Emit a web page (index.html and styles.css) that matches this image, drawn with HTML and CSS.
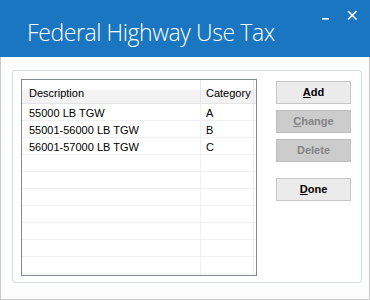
FILE: index.html
```html
<!DOCTYPE html>
<html>
<head>
<meta charset="utf-8">
<link rel="stylesheet" href="styles.css">
</head>
<body>
<div class="window">
  <div class="titlebar">
    <span class="title">Federal Highway Use Tax</span>
    <div class="controls">
      <svg class="ctl" width="10" height="10" viewBox="0 0 10 10"><rect x="1" y="8" width="7" height="1.6" fill="#fff"/></svg>
      <svg class="ctl" width="11" height="10" viewBox="0 0 11 10"><path d="M1 1 L9.5 9.5 M9.5 1 L1 9.5" stroke="#fff" stroke-width="1.6" fill="none"/></svg>
    </div>
  </div>
  <div class="client">
    <div class="group">
      <div class="list">
        <div class="row header"><div class="c1">Description</div><div class="c2">Category</div><div class="c3"></div></div>
        <div class="row"><div class="c1">55000 LB TGW</div><div class="c2">A</div><div class="c3"></div></div>
        <div class="row"><div class="c1">55001-56000 LB TGW</div><div class="c2">B</div><div class="c3"></div></div>
        <div class="row"><div class="c1">56001-57000 LB TGW</div><div class="c2">C</div><div class="c3"></div></div>
        <div class="row"><div class="c1"></div><div class="c2"></div><div class="c3"></div></div>
        <div class="row"><div class="c1"></div><div class="c2"></div><div class="c3"></div></div>
        <div class="row"><div class="c1"></div><div class="c2"></div><div class="c3"></div></div>
        <div class="row"><div class="c1"></div><div class="c2"></div><div class="c3"></div></div>
        <div class="row"><div class="c1"></div><div class="c2"></div><div class="c3"></div></div>
        <div class="row"><div class="c1"></div><div class="c2"></div><div class="c3"></div></div>
        <div class="row"><div class="c1"></div><div class="c2"></div><div class="c3"></div></div>
        <div class="row"><div class="c1"></div><div class="c2"></div><div class="c3"></div></div>
      </div>
      <div class="buttons">
        <div class="btn"><u>A</u>dd</div>
        <div class="btn disabled"><u>C</u>hange</div>
        <div class="btn disabled">Delete</div>
        <div class="btn done"><u>D</u>one</div>
      </div>
    </div>
  </div>
</div>
</body>
</html>
```

FILE: styles.css
```css
html, body {
  margin: 0;
  padding: 0;
  background: #ffffff;
}
.window {
  width: 370px;
  height: 300px;
  display: flex;
  flex-direction: column;
  font-family: "Liberation Sans", Arial, sans-serif;
  font-size: 11px;
  color: #000;
}
.titlebar {
  height: 57px;
  background: #1a76c1;
  display: flex;
  align-items: flex-start;
  justify-content: space-between;
  flex-shrink: 0;
}
.title {
  font-family: "Open Sans", sans-serif;
  font-weight: 300;
  font-size: 23px;
  letter-spacing: -0.4px;
  line-height: 33px;
  color: #fff;
  margin-left: 27px;
  margin-top: 16px;
  white-space: nowrap;
}
.controls {
  display: flex;
  gap: 16px;
  margin-top: 10px;
  margin-right: 12px;
}
.ctl {
  display: block;
}
.client {
  flex: 1;
  border: 1px solid #c8c8c8;
  border-top: none;
  padding: 13px 7px 16px 11px;
  background: #fdfdfd;
}
.group {
  height: 213px;
  box-sizing: border-box;
  border: 1px solid #d5dde4;
  border-radius: 3px;
  background: #fff;
  padding: 8px 0 0 8px;
  display: flex;
  align-items: flex-start;
}
.list {
  width: 236px;
  height: 197px;
  box-sizing: border-box;
  border: 1px solid #828790;
  background: #fff;
  overflow: hidden;
}
.row {
  display: grid;
  grid-template-columns: 179px 53px 1fr;
  height: 17px;
  box-sizing: border-box;
  border-bottom: 1px solid #f0f0f0;
}
.row > div {
  border-right: 1px solid #f0f0f0;
  padding: 3px 0 0 0;
  line-height: 13px;
  white-space: nowrap;
  overflow: hidden;
}
.row .c1 { padding-left: 7px; }
.row .c2 { padding-left: 5px; }
.row .c3 { border-right: none; }
.row.header {
  height: 24px;
  border-bottom: 1px solid #e5e5e5;
  background: linear-gradient(#ffffff 0 10px, #f3f3f3 10px);
}
.row.header > div {
  border-right-color: #e5e5e5;
  padding-top: 4px;
  line-height: 18px;
}
.row.header .c1 { padding-left: 7px; }
.row.header .c2 { padding-left: 5px; }
.buttons {
  display: flex;
  flex-direction: column;
  gap: 6px;
  margin-left: 19px;
  margin-top: 2px;
}
.btn {
  width: 75px;
  height: 23px;
  box-sizing: border-box;
  border: 1px solid #c6c6c6;
  background: #ebebeb;
  font-weight: bold;
  text-align: center;
  line-height: 21px;
  color: #000;
}
.btn u {
  text-underline-offset: 1px;
}
.btn.disabled {
  background: #cccccc;
  border-color: #bfbfbf;
  color: #848484;
}
.btn.done {
  margin-top: 10px;
}
```
